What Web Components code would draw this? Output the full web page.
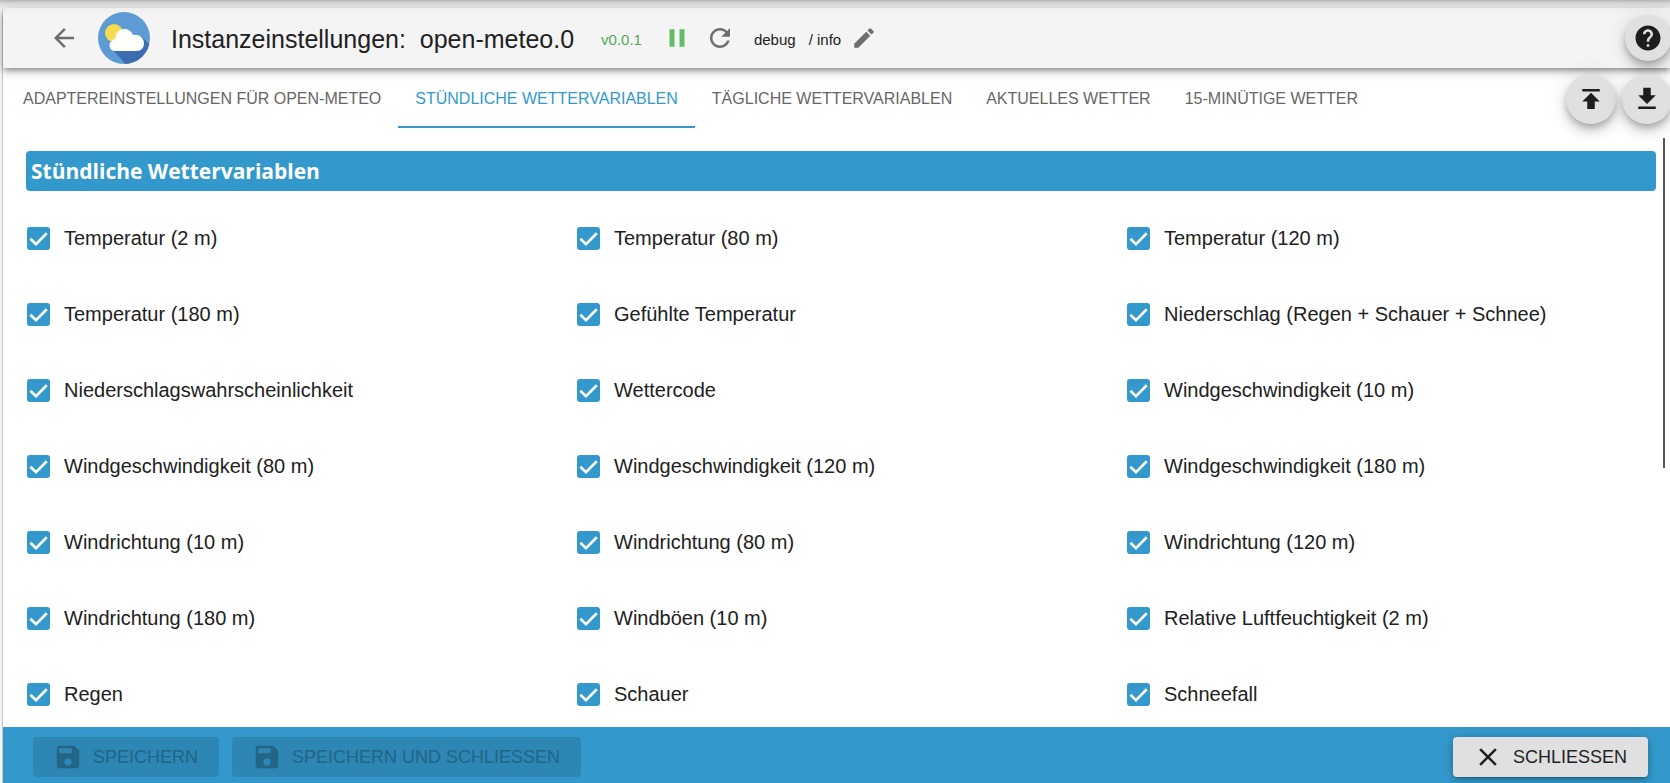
<!DOCTYPE html>
<html lang="de">
<head>
<meta charset="utf-8">
<title>Instanzeinstellungen: open-meteo.0</title>
<style>
  html, body { height: 100%; margin: 0; }
  body { overflow: hidden; background: #fff; font-family: "Liberation Sans", Arial, sans-serif; color: #212121; }
</style>
</head>
<body>
<instance-settings></instance-settings>
<script>
const define = (name, html, setup) => {
  const template = document.createElement('template');
  template.innerHTML = html;
  customElements.define(name, class extends HTMLElement {
    constructor() {
      super();
      this.attachShadow({ mode: 'open' }).append(template.content.cloneNode(true));
    }
    connectedCallback() { if (setup) setup(this, this.shadowRoot); }
  });
};

const ICONS = {
  back: 'M20 11H7.83l5.59-5.59L12 4l-8 8 8 8 1.41-1.41L7.83 13H20v-2z',
  pause: 'M6 19h4V5H6v14zm8-14v14h4V5h-4z',
  refresh: 'M17.65 6.35C16.2 4.9 14.21 4 12 4c-4.42 0-7.99 3.58-7.99 8s3.57 8 7.99 8c3.73 0 6.84-2.55 7.73-6h-2.08c-.82 2.33-3.04 4-5.65 4-3.31 0-6-2.69-6-6s2.69-6 6-6c1.66 0 3.14.69 4.22 1.78L13 11h7V4l-2.35 2.35z',
  edit: 'M3 17.25V21h3.75L17.81 9.94l-3.75-3.75L3 17.25zM20.71 7.04c.39-.39.39-1.02 0-1.41l-2.34-2.34a.9959.9959 0 0 0-1.41 0l-1.83 1.83 3.75 3.75 1.83-1.83z',
  help: 'M12 2C6.48 2 2 6.48 2 12s4.48 10 10 10 10-4.48 10-10S17.52 2 12 2zm1 17h-2v-2h2v2zm2.07-7.75l-.9.92C13.45 12.9 13 13.5 13 15h-2v-.5c0-1.1.45-2.1 1.17-2.83l1.24-1.26c.37-.36.59-.86.59-1.41 0-1.1-.9-2-2-2s-2 .9-2 2H8c0-2.21 1.79-4 4-4s4 1.79 4 4c0 .88-.36 1.68-.93 2.25z',
  publish: 'M5 4v2h14V4H5zm0 10h4v6h6v-6h4l-7-7-7 7z',
  download: 'M19 9h-4V3H9v6H5l7 7 7-7zM5 18v2h14v-2H5z',
  save: 'M17 3H5c-1.11 0-2 .9-2 2v14c0 1.1.89 2 2 2h14c1.1 0 2-.9 2-2V7l-4-4zm-5 16c-1.66 0-3-1.34-3-3s1.34-3 3-3 3 1.34 3 3-1.34 3-3 3zm3-10H5V5h10v4z',
  close: 'M19 6.41L17.59 5 12 10.59 6.41 5 5 6.41 10.59 12 5 17.59 6.41 19 12 13.41 17.59 19 19 17.59 13.41 12z'
};

define('md-icon', `
  <style>
    :host { display: block; width: 30px; height: 30px; flex: none; }
    svg { display: block; width: 100%; height: 100%; fill: currentColor; }
  </style>
  <svg viewBox="0 0 24 24" aria-hidden="true"><path></path></svg>`,
  (host, root) => root.querySelector('path').setAttribute('d', ICONS[host.getAttribute('name')]));

define('weather-logo', `
  <style>
    :host { display: block; width: 52px; height: 52px; flex: none; }
    svg { display: block; width: 100%; height: 100%; }
  </style>
  <svg viewBox="0 0 52 52" aria-hidden="true">
    <clipPath id="disc"><circle cx="26" cy="26" r="26"/></clipPath>
    <g clip-path="url(#disc)">
      <path fill="#5e9ad3" d="M0 0h52v52H0z"/>
      <path fill="#3c6cb1" d="M14 37L43 24l14 14v20H33z"/>
      <circle cx="16" cy="21" r="9" fill="#f5dc4e"/>
      <path fill="#fff" d="M17 39a5.500 5.500 0 0 1-2.500-10.400c.4-1.100 1.500-1.700 3-1.600C17.300 21 21 17 26.500 17c4 0 7 2.300 8.500 6 6-1.500 11 2.500 11 8.500 0 4.500-3.200 7.500-7 7.500z"/>
    </g>
  </svg>`);

define('icon-button', `
  <style>
    :host { display: block; flex: none; color: #6e6e6e; }
    button { display: block; padding: 0; border: 0; background: none; color: inherit; cursor: pointer; }
  </style>
  <button type="button"><slot></slot></button>`,
  (host, root) => root.querySelector('button').setAttribute('aria-label', host.getAttribute('label')));

define('round-button', `
  <style>
    :host { display: block; flex: none; width: var(--size, 50px); height: var(--size, 50px); }
    button {
      display: flex; align-items: center; justify-content: center; width: 100%; height: 100%;
      padding: 0; border: 0; border-radius: 50%; background: #e0e0e0; color: #1d1d1d; cursor: pointer;
      box-shadow: 0 4px 6px -1px rgba(0,0,0,.2), 0 8px 12px rgba(0,0,0,.14), 0 1px 22px rgba(0,0,0,.12);
    }
  </style>
  <button type="button"><slot></slot></button>`,
  (host, root) => root.querySelector('button').setAttribute('aria-label', host.getAttribute('label')));

define('settings-header', `
  <style>
    :host {
      display: flex; align-items: center; height: 60px; position: relative;
      padding-left: 46px; background: linear-gradient(#efefef, #f4f4f4 6px); border-top-left-radius: 5px;
      box-shadow: 0 3px 5px -1px rgba(0,0,0,.3), 0 5px 8px rgba(0,0,0,.14), 0 1px 12px rgba(0,0,0,.12);
    }
    weather-logo { margin: 0 21px 0 19px; }
    h1 { margin: 0; padding-top: 2px; font-size: 25px; font-weight: 400; line-height: 32px; white-space: pre; }
    .version { margin: 0 20px 0 27px; padding-top: 2px; font-size: 15px; color: #56a55a; }
    .pause { color: #66bb6a; margin-right: 13px; }
    .level { font-size: 15px; margin-left: 19px; padding-top: 3px; }
    .level + .level { margin: 0 8px 0 13px; }
    md-icon.small { width: 26px; height: 26px; }
    .edit { margin-left: 2px; }
    .help { --size: 46px; margin: 0 -1px 0 auto; }
  </style>
  <icon-button label="Zurück"><md-icon name="back"></md-icon></icon-button>
  <weather-logo></weather-logo>
  <h1>Instanzeinstellungen:  open-meteo.0</h1>
  <span class="version">v0.0.1</span>
  <icon-button class="pause" label="Pause"><md-icon name="pause"></md-icon></icon-button>
  <icon-button label="Neu starten"><md-icon name="refresh"></md-icon></icon-button>
  <span class="level">debug</span><span class="level">/ info</span>
  <icon-button class="edit" label="Bearbeiten"><md-icon class="small" name="edit"></md-icon></icon-button>
  <round-button class="help" label="Hilfe"><md-icon name="help"></md-icon></round-button>`);

define('settings-tab', `
  <style>
    :host { display: block; }
    button {
      height: 60px; padding: 4px 17px 0; border: 0; border-bottom: 2px solid transparent; background: none;
      font: 16px/20px "Liberation Sans", Arial, sans-serif; color: #666; white-space: nowrap;
      text-transform: uppercase; cursor: pointer;
    }
    :host([selected]) button { color: #3399cc; border-bottom-color: #3399cc; }
  </style>
  <button type="button" role="tab"><slot></slot></button>`,
  (host, root) => root.querySelector('button').setAttribute('aria-selected', host.hasAttribute('selected')));

define('settings-tabs', `
  <style>
    :host { display: flex; align-items: center; height: 60px; padding-left: 3px; position: relative; }
    .tabs { display: flex; flex: 1; }
    .actions { display: flex; gap: 6px; margin-right: -2px; padding-top: 2px; }
  </style>
  <div class="tabs" role="tablist"><slot></slot></div>
  <div class="actions">
    <round-button label="Importieren"><md-icon name="publish"></md-icon></round-button>
    <round-button label="Exportieren"><md-icon name="download"></md-icon></round-button>
  </div>`);

define('check-option', `
  <style>
    :host { display: block; }
    label { display: grid; grid-template-columns: 22px 1fr; column-gap: 15px; align-items: center; height: 30px; font-size: 20px; line-height: 30px; cursor: pointer; }
    input { grid-area: 1 / 1; appearance: none; width: 23px; height: 23px; margin: 0; border: 2px solid #666; border-radius: 3px; }
    input:checked { background: #3399cc; border-color: #3399cc; }
    svg { grid-area: 1 / 1; width: 23px; height: 23px; fill: none; stroke: #fff; stroke-width: 2.500; pointer-events: none; }
    input:not(:checked) + svg { display: none; }
    span { grid-area: 1 / 2; white-space: nowrap; }
  </style>
  <label>
    <input type="checkbox" checked>
    <svg viewBox="0 0 22 22" aria-hidden="true"><path d="M3.200 11.200L8.600 16.500 18.900 6"/></svg>
    <span><slot></slot></span>
  </label>`);

define('settings-panel', `
  <style>
    :host { display: block; position: relative; min-height: 0; }
    .scroll { box-sizing: border-box; height: 100%; overflow: hidden auto; scrollbar-width: none; padding: 13px 14px 0 23px; }
    h2 { margin: 0 0 32px; padding: 0 5px; border-radius: 4px; background: #3399cc; color: #fff; font: 700 21px/40px "Open Sans", "Noto Sans", sans-serif; }
    .grid { display: grid; grid-template-columns: repeat(3, 1fr); gap: 46px 20px; margin: 0 -1px 0 1px; }
    .thumb { position: absolute; top: 0; right: 5px; width: 2px; height: 56%; background: #555; }
  </style>
  <div class="scroll">
    <h2>Stündliche Wettervariablen</h2>
    <div class="grid"><slot></slot></div>
  </div>
  <div class="thumb"></div>`);

define('action-button', `
  <style>
    :host { display: block; }
    button {
      display: flex; align-items: center; gap: 10px; height: 40px; padding: 0 21px 0 20px; border: 0; border-radius: 4px;
      background: #e0e0e0; color: #1f1f1f; font: 18px/30px "Liberation Sans", Arial, sans-serif; text-transform: uppercase; white-space: nowrap; cursor: pointer;
      box-shadow: 0 4px 1px -3px rgba(0,0,0,.2), 0 3px 6px rgba(0,0,0,.2), 0 1px 12px rgba(0,0,0,.14);
    }
    button:disabled { background: #2d86b4; color: #226587; box-shadow: none; cursor: default; }
  </style>
  <button type="button"><slot name="icon"></slot><slot></slot></button>`,
  (host, root) => { root.querySelector('button').disabled = host.hasAttribute('disabled'); });

define('settings-footer', `
  <style>
    :host { display: flex; align-items: flex-start; gap: 13px; box-sizing: border-box; height: 56px; padding: 10px 22px 0 30px; background: #3399cc; }
    .close { margin-left: auto; }
  </style>
  <action-button disabled><md-icon slot="icon" name="save"></md-icon>Speichern</action-button>
  <action-button disabled><md-icon slot="icon" name="save"></md-icon>Speichern und schliessen</action-button>
  <action-button class="close"><md-icon slot="icon" name="close"></md-icon>Schliessen</action-button>`);

define('instance-settings', `
  <style>
    :host {
      display: grid; grid-template-columns: minmax(0, 1fr); grid-template-rows: auto auto 1fr auto; box-sizing: border-box; height: 100vh; overflow: hidden;
      padding: 8px 0 0 3px;
      background: linear-gradient(#b4b4b4, #d8d8d8 3px, #efefef 8px, transparent 16px), linear-gradient(90deg, #f4f4f4 2px, #c4c4c4 2px 3px, #fff 3px);
    }
    settings-header { z-index: 2; }
    settings-tabs { z-index: 3; }
    settings-panel { margin-top: 10px; }
  </style>
  <settings-header></settings-header>
  <settings-tabs>
    <settings-tab>Adaptereinstellungen für Open-Meteo</settings-tab>
    <settings-tab selected>Stündliche Wettervariablen</settings-tab>
    <settings-tab>Tägliche Wettervariablen</settings-tab>
    <settings-tab>Aktuelles Wetter</settings-tab>
    <settings-tab>15-minütige Wetter</settings-tab>
  </settings-tabs>
  <settings-panel></settings-panel>
  <settings-footer></settings-footer>`,
  (host, root) => {
    const panel = root.querySelector('settings-panel');
    panel.replaceChildren(...[
      'Temperatur (2 m)', 'Temperatur (80 m)', 'Temperatur (120 m)',
      'Temperatur (180 m)', 'Gefühlte Temperatur', 'Niederschlag (Regen + Schauer + Schnee)',
      'Niederschlagswahrscheinlichkeit', 'Wettercode', 'Windgeschwindigkeit (10 m)',
      'Windgeschwindigkeit (80 m)', 'Windgeschwindigkeit (120 m)', 'Windgeschwindigkeit (180 m)',
      'Windrichtung (10 m)', 'Windrichtung (80 m)', 'Windrichtung (120 m)',
      'Windrichtung (180 m)', 'Windböen (10 m)', 'Relative Luftfeuchtigkeit (2 m)',
      'Regen', 'Schauer', 'Schneefall'
    ].map(text => {
      const option = document.createElement('check-option');
      option.textContent = text;
      return option;
    }));
  });
</script>
</body>
</html>
